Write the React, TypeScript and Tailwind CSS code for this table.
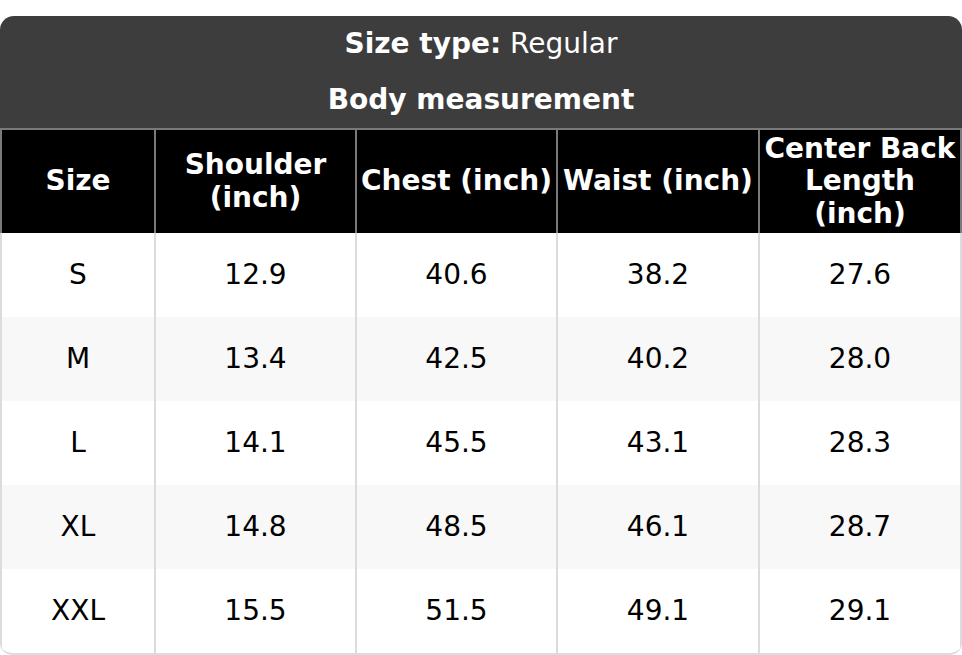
const headers = ["Size", "Shoulder (inch)", "Chest (inch)", "Waist (inch)", "Center Back Length (inch)"];

const rows = [
  ["S", "12.9", "40.6", "38.2", "27.6"],
  ["M", "13.4", "42.5", "40.2", "28.0"],
  ["L", "14.1", "45.5", "43.1", "28.3"],
  ["XL", "14.8", "48.5", "46.1", "28.7"],
  ["XXL", "15.5", "51.5", "49.1", "29.1"],
];

const cols = "grid grid-cols-[156px_201px_201px_202px_202px]";

export default function App() {
  return (
    <div className="bg-white pt-4 w-[962px] font-['DejaVu_Sans',sans-serif] text-[28px] leading-[32.5px]">
      <div className="rounded-t-[14px] rounded-b-[12px] overflow-hidden">
        <div className="bg-[#3d3d3d] text-white text-center border-b-2 border-[#7a7a7a]">
          <div className="h-[56px] flex items-center justify-center">
            <span>
              <b>Size type:</b> Regular
            </span>
          </div>
          <div className="h-[56px] flex items-center justify-center font-bold">Body measurement</div>
        </div>

        <div className={`${cols} bg-black text-white font-bold text-center`}>
          {headers.map((h, i) => (
            <div
              key={h}
              className={`h-[103px] flex items-center justify-center px-1 border-r-2 border-[#7a7a7a] ${i === 0 ? "border-l-2" : ""}`}
            >
              {h}
            </div>
          ))}
        </div>

        {rows.map((r, ri) => (
          <div
            key={r[0]}
            className={`${cols} text-black text-center ${ri % 2 === 1 ? "bg-[#f8f8f8]" : "bg-white"} ${ri === rows.length - 1 ? "border-b-2 border-[#dcdcdc] rounded-b-[12px]" : ""}`}
          >
            {r.map((c, i) => (
              <div
                key={i}
                className={`h-[84px] flex items-center justify-center border-r-2 border-[#dcdcdc] ${i === 0 ? "border-l-2" : ""}`}
              >
                {c}
              </div>
            ))}
          </div>
        ))}
      </div>
    </div>
  );
}
